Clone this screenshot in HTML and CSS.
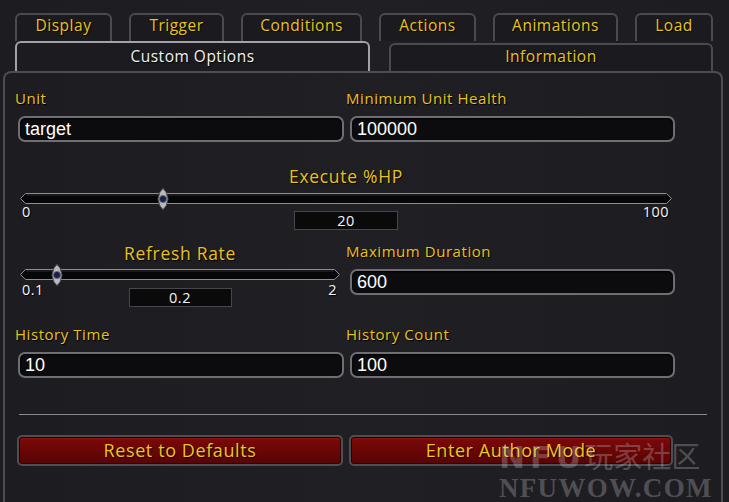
FILE: index.html
```html
<!DOCTYPE html>
<html lang="en">
<head>
<meta charset="utf-8">
<title>Custom Options</title>
<link rel="stylesheet" href="styles.css">
</head>
<body>
<div class="frame">
  <div class="tabs tabs-top">
    <div class="tab w-display">Display</div>
    <div class="tab w-trigger">Trigger</div>
    <div class="tab w-conditions">Conditions</div>
    <div class="tab w-actions">Actions</div>
    <div class="tab w-animations">Animations</div>
    <div class="tab w-load">Load</div>
  </div>
  <div class="tabs tabs-second">
    <div class="tab tab-active w-custom">Custom Options</div>
    <div class="tab tab-info w-info">Information</div>
  </div>
  <div class="panel">
    <div class="grid row-1">
      <div class="field left">
        <div class="label">Unit</div>
        <div class="input">target</div>
      </div>
      <div class="field right">
        <div class="label">Minimum Unit Health</div>
        <div class="input">100000</div>
      </div>
    </div>

    <div class="slider-block wide">
      <div class="slider-title">Execute %HP</div>
      <div class="slider">
        <svg class="track" width="652" height="11" viewBox="0 0 652 11">
          <polygon points="0.5,5.5 5.5,0.5 646.5,0.5 651.5,5.5 646.5,10.5 5.5,10.5" fill="#060507" stroke="#8d8c90" stroke-width="1"/>
          <line x1="6" y1="2" x2="646" y2="2" stroke="#2e2d31" stroke-width="1"/>
        </svg>
        <svg class="thumb" style="left: 137px" width="12" height="22" viewBox="0 0 12 22">
          <path d="M6 0.5 L9 4 L11 11 L9 18 L6 21.5 L3 18 L1 11 L3 4 Z" fill="#b9b8bd" stroke="#55545a" stroke-width="1"/>
          <circle cx="6" cy="11" r="3.6" fill="#1a1f4a" stroke="#6e6d75" stroke-width="1"/>
        </svg>
      </div>
      <div class="slider-foot">
        <span class="range min">0</span>
        <div class="valuebox wide-box">20</div>
        <span class="range max">100</span>
      </div>
    </div>

    <div class="grid row-3">
      <div class="field left">
        <div class="slider-block narrow">
          <div class="slider-title">Refresh Rate</div>
          <div class="slider">
            <svg class="track" width="320" height="11" viewBox="0 0 320 11">
              <polygon points="0.5,5.5 5.5,0.5 314.5,0.5 319.5,5.5 314.5,10.5 5.5,10.5" fill="#060507" stroke="#8d8c90" stroke-width="1"/>
              <line x1="6" y1="2" x2="314" y2="2" stroke="#2e2d31" stroke-width="1"/>
            </svg>
            <svg class="thumb" style="left: 31px" width="12" height="22" viewBox="0 0 12 22">
              <path d="M6 0.5 L9 4 L11 11 L9 18 L6 21.5 L3 18 L1 11 L3 4 Z" fill="#b9b8bd" stroke="#55545a" stroke-width="1"/>
              <circle cx="6" cy="11" r="3.6" fill="#1a1f4a" stroke="#6e6d75" stroke-width="1"/>
            </svg>
          </div>
          <div class="slider-foot">
            <span class="range min">0.1</span>
            <div class="valuebox small-box">0.2</div>
            <span class="range max">2</span>
          </div>
        </div>
      </div>
      <div class="field right">
        <div class="label">Maximum Duration</div>
        <div class="input">600</div>
      </div>
    </div>

    <div class="grid row-4">
      <div class="field left">
        <div class="label">History Time</div>
        <div class="input">10</div>
      </div>
      <div class="field right">
        <div class="label">History Count</div>
        <div class="input">100</div>
      </div>
    </div>

    <div class="separator"></div>

    <div class="buttons">
      <div class="button left-btn">Reset to Defaults</div>
      <div class="button right-btn">Enter Author Mode</div>
    </div>
  </div>
</div>
<div class="watermark">
  <div class="wm-top"><span class="wm-logo">NFU</span>玩家社区</div>
  <div class="wm-bottom">NFUWOW.COM</div>
</div>
</body>
</html>
```

FILE: styles.css
```css
* { box-sizing: border-box; }

html, body {
  margin: 0;
  padding: 0;
}

body {
  width: 729px;
  height: 502px;
  overflow: hidden;
  position: relative;
  background: linear-gradient(90deg, #1d1c21 0%, #201f24 50%, #1d1c21 100%);
  font-family: "Open Sans", "DejaVu Sans", sans-serif;
  color: #e8c21c;
}

.frame {
  padding-top: 13px;
}

/* ---------- tabs ---------- */
.tabs {
  display: flex;
  padding-left: 15px;
}

.tabs-top {
  gap: 17px;
}

.tab {
  height: 28px;
  border: 2px solid #4b4a50;
  border-bottom: none;
  border-radius: 6px 6px 0 0;
  background: #1b1a1f;
  text-align: center;
  font-size: 15.5px;
  line-height: 18px;
  padding-top: 1px;
  color: #e9c41d;
  text-shadow: 1px 1px 1px #000;
  letter-spacing: 0.5px;
  white-space: nowrap;
}

.w-display { width: 97px; }
.w-trigger { width: 95px; }
.w-conditions { width: 121px; }
.w-actions { width: 97px; }
.w-animations { width: 125px; }
.w-load { width: 78px; }

.tabs-second {
  align-items: flex-end;
}

.tab-active {
  height: 30px;
  border-color: #a3a2a7;
  color: #f2f2f2;
  padding-top: 4px;
  background: #1c1b20;
}

.tab-info {
  margin-left: 19px;
  padding-top: 2px;
}

.w-custom { width: 355px; }
.w-info { width: 324px; }

/* ---------- panel ---------- */
.panel {
  margin-left: 3px;
  width: 720px;
  height: 440px;
  border: 2px solid #4d4c52;
  border-bottom: none;
  border-radius: 8px 8px 0 0;
  padding: 15px 0 0 10px;
}

.grid {
  display: grid;
  grid-template-columns: 331px 331px;
  align-items: start;
}

.label {
  height: 20px;
  line-height: 20px;
  font-size: 15px;
  letter-spacing: 0.55px;
  color: #e8c21c;
  text-shadow: 1px 1px 1px #000;
  white-space: nowrap;
}

.input {
  margin-top: 8px;
  height: 26px;
  border: 2px solid #6f6e73;
  border-radius: 7px;
  background: #0c0b0e;
  box-shadow: inset 0 1px 2px #000;
  color: #ffffff;
  font-family: "Liberation Sans", Arial, sans-serif;
  font-size: 18px;
  line-height: 22px;
  padding-left: 5px;
}

.left .input {
  margin-left: 3px;
  width: 326px;
}

.right .input {
  margin-left: 4px;
  width: 325px;
}

/* ---------- sliders ---------- */
.slider-block {
  margin-left: 5px;
}

.slider-block.wide {
  width: 652px;
  margin-top: 24px;
}

.slider-block.narrow {
  width: 320px;
  margin-top: 2px;
}

.slider-title {
  text-align: center;
  height: 20px;
  line-height: 20px;
  font-size: 17.5px;
  letter-spacing: 0.7px;
  color: #e8c21c;
  text-shadow: 1px 1px 1px #000;
  white-space: nowrap;
}

.slider {
  position: relative;
  height: 11px;
  margin-top: 7px;
}

.narrow .slider {
  margin-top: 6px;
}

.track {
  display: block;
}

.thumb {
  position: absolute;
  top: -5px;
}

.slider-foot {
  display: grid;
  grid-template-columns: 1fr auto 1fr;
  align-items: start;
  height: 26px;
}

.narrow .slider-foot {
  height: 27px;
}

.range {
  color: #f4f4f4;
  font-size: 14.5px;
  line-height: 14px;
  margin-top: 1px;
  letter-spacing: 0.5px;
  text-shadow: 1px 1px 1px #000;
}

.narrow .range {
  margin-top: 3px;
}

.range.min {
  justify-self: start;
  padding-left: 2px;
}

.range.max {
  justify-self: end;
  padding-right: 3px;
}

.valuebox {
  margin-top: 7px;
  height: 19px;
  border: 1px solid #47464c;
  background: #0a0a0b;
  color: #f4f4f4;
  font-size: 14.5px;
  letter-spacing: 0.5px;
  line-height: 17px;
  text-align: center;
}

.narrow .valuebox {
  margin-top: 8px;
}

.wide-box { width: 104px; }
.small-box { width: 103px; }

.row-3 {
  margin-top: 11px;
}

.row-4 {
  margin-top: 17px;
}

/* ---------- separator & buttons ---------- */
.separator {
  margin-top: 36px;
  margin-left: 4px;
  width: 688px;
  height: 1px;
  background: #8a898e;
}

.buttons {
  margin-top: 20px;
  margin-left: 2px;
  display: flex;
  gap: 6px;
}

.button {
  height: 31px;
  border: 2px solid #4f4e54;
  border-radius: 5px;
  background: linear-gradient(180deg, #7b0a0a 0%, #6c0606 45%, #560404 100%);
  box-shadow: inset 0 0 0 1px #2a0000, inset 0 2px 3px rgba(255, 80, 60, 0.15);
  color: #f0c51e;
  text-align: center;
  font-size: 18px;
  line-height: 26px;
  text-shadow: 1px 1px 1px #000;
  letter-spacing: 0.6px;
  white-space: nowrap;
}

.left-btn { width: 326px; }
.right-btn { width: 324px; }

/* ---------- watermark ---------- */
.watermark {
  position: absolute;
  left: 499px;
  top: 438px;
  color: rgba(205, 205, 210, 0.3);
  pointer-events: none;
}

.wm-top {
  font-family: "Noto Sans CJK SC", "Noto Sans", sans-serif;
  font-size: 29px;
  line-height: 34px;
  white-space: nowrap;
}

.wm-logo {
  font-family: "DejaVu Sans", sans-serif;
  font-weight: bold;
  font-size: 31px;
  letter-spacing: 5px;
  margin-right: -2px;
}

.wm-bottom {
  font-family: "Liberation Serif", serif;
  font-weight: bold;
  font-size: 27px;
  line-height: 28px;
  letter-spacing: 1.3px;
  white-space: nowrap;
}
```
